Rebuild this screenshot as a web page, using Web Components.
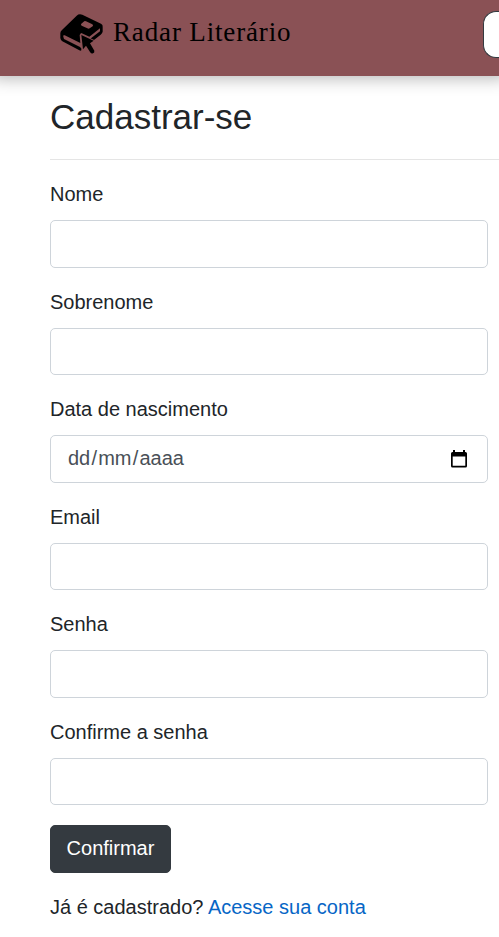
<!DOCTYPE html>
<html lang="pt-BR">
<head>
<meta charset="utf-8">
<title>Radar Literário</title>
<style>
html{overflow:hidden}
body{margin:0;background:#fff;color:#212529;font:20px/30px "Liberation Sans",Arial,sans-serif;overflow:hidden}
</style>
</head>
<body>
<signup-page></signup-page>
<script>
function define(name, html) {
  const template = document.createElement('template');
  template.innerHTML = html;
  customElements.define(name, class extends HTMLElement {
    constructor() {
      super();
      this.attachShadow({mode: 'open'}).append(template.content.cloneNode(true));
    }
  });
}

define('book-logo', `
<style>:host{display:block;flex:none;width:64px;height:56px}svg{display:block}</style>
<svg width="64" height="56" viewBox="0 0 192 168">
  <path d="M31 85Q31 79 36 75L80 32Q87 25 97 29L153 56Q159 59 158 65V80Q157 85 152 89L128 108L120 102L150 79V70L118 95L94 84L89 90L91 114L44 91Q38 90 40 95L42 102L90 126Q96 130 94 136Q92 138 88 136L37 109Q32 106 31 99Z"/>
  <path d="M101 50Q104 47 108 49L127 58Q131 61 128 64L119 70Q116 72 112 70L95 62Q91 59 94 56Z" fill="#8a5155"/>
  <path d="M94 90L131 107L120 115L133 137Q134 143 129 145Q124 147 120 141L108 122L99 133Z" stroke="#8a5155" stroke-width="5" paint-order="stroke"/>
</svg>`);

define('site-header', `
<style>
:host{display:grid;grid-template-columns:64px 369px 16px;height:76px;padding-left:50px;background:#8a5155;box-shadow:0 -6px 16px 8px rgba(0,0,0,.3)}
book-logo{margin-top:5px}
.name{margin:12px 0 0 -1px;color:#000;font:27px/40px "Liberation Serif",serif;letter-spacing:.85px;white-space:nowrap}
.search{box-sizing:border-box;height:47px;margin-top:11px;border:1px solid #343a40;border-right:0;border-radius:13px 0 0 13px;background:#fff}
</style>
<book-logo></book-logo><div class="name"><slot></slot></div><div class="search"></div>`);

define('form-field', `
<style>
:host{display:block;margin-bottom:19px}
.label{height:30px;margin-bottom:11px}
.box{box-sizing:border-box;display:flex;align-items:center;width:438px;height:47.5px;padding:0 19px 0 16px;border:1px solid #ced4da;border-radius:5px;background:#fff;color:#495057}
</style>
<div class="label"><slot name="label"></slot></div><div class="box"><slot></slot></div>`);

define('date-hint', `
<style>
:host{display:flex;flex:1;justify-content:space-between;align-items:center}
.text{padding-bottom:2px}
.d{padding:0 1.2px}
.d:first-child{padding-left:1px}
svg{display:block}
</style>
<div class="text"><span class="d">dd</span>/<span class="d">mm</span>/<span class="d">aaaa</span></div>
<svg width="18" height="20" viewBox="0 0 18 20"><path fill="#000" fill-rule="evenodd" d="M3 1h2v2h8V1h2v2h.5Q17 3 17 4.500V17Q17 18.500 15.500 18.500H2.500Q1 18.500 1 17V4.500Q1 3 2.500 3H3ZM2.700 7.500V16.800H15.300V7.500Z"/></svg>`);

define('action-button', `
<style>
:host{display:block;margin-top:20px}
button{display:block;box-sizing:border-box;height:47.5px;width:121px;padding:0 0 2px;border:1px solid #343a40;border-radius:5px;background:#343a40;color:#fff;font:inherit}
</style>
<button type="button"><slot></slot></button>`);

define('signup-page', `
<style>
:host{display:block}
main{padding:20px 0 0 50px}
h1{margin:0;font-weight:400;font-size:35px;line-height:42px}
hr{margin:21px 0 19px;border:0;border-top:1px solid #e5e5e5}
p{margin:19.500px 0 0}
a{color:#0766c6;text-decoration:none}
</style>
<site-header>Radar Literário</site-header>
<main>
  <h1>Cadastrar-se</h1>
  <hr>
  <form-field><span slot="label">Nome</span></form-field>
  <form-field><span slot="label">Sobrenome</span></form-field>
  <form-field><span slot="label">Data de nascimento</span><date-hint></date-hint></form-field>
  <form-field><span slot="label">Email</span></form-field>
  <form-field><span slot="label">Senha</span></form-field>
  <form-field><span slot="label">Confirme a senha</span></form-field>
  <action-button>Confirmar</action-button>
  <p>Já é cadastrado? <a href="#">Acesse sua conta</a></p>
</main>`);
</script>
</body>
</html>
